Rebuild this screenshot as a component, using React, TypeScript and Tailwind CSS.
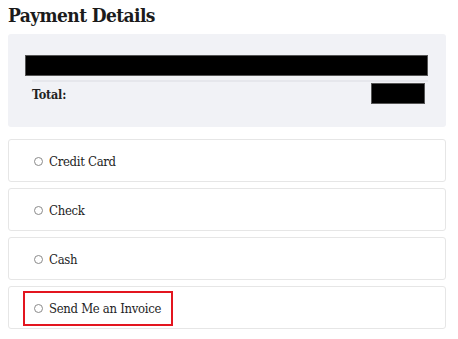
import React from 'react';

const options = ['Credit Card', 'Check', 'Cash', 'Send Me an Invoice'];

export default function App() {
  return (
    <div className="w-[458px] h-[339px] bg-white pl-2 pt-[2px] font-['DejaVu_Serif',serif] [font-stretch:semi-condensed] text-[#222]">
      <h2 className="text-[19px] font-bold leading-[26px] tracking-[-0.6px] text-[#1b1b1b]">Payment Details</h2>

      <div className="w-[438px]">
        {/* Summary box */}
        <div className="mt-[6px] h-[93px] rounded-[3px] bg-[#f1f2f6] pl-[17px] pr-[18px] pt-[21px]">
          <div className="h-[21px] bg-black border border-[#555]" />
          <div className="ml-[7px] border-t-2 border-[#e6e7ec] mt-[4px] flex items-start justify-between pr-[3px]">
            <span className="mt-[4px] text-[12.5px] font-bold leading-[18px] tracking-[-0.2px]">Total:</span>
            <div className="mt-px h-[21px] w-[54px] bg-black border border-[#555]" />
          </div>
        </div>

        {/* Payment options */}
        <div className="mt-[12px] flex flex-col gap-[6px]">
          {options.map((label, i) => {
            const last = i === options.length - 1;
            return (
              <div
                key={label}
                className="h-[43px] rounded-[3px] border border-[#e6e6e6] bg-white flex items-center pl-[14px] pt-[2px]"
              >
                <div
                  className={
                    last
                      ? 'flex items-center h-[35px] border-2 border-[#e3151f] pl-[9px] pr-[10px]'
                      : 'flex items-center pl-[11px]'
                  }
                >
                  <span className="w-[9px] h-[9px] rounded-full border border-[#8a8a8a] mr-[6px] shrink-0" />
                  <span className="whitespace-nowrap text-[13px] leading-[18px] tracking-[-0.3px] text-[#1e1e1e]">{label}</span>
                </div>
              </div>
            );
          })}
        </div>
      </div>
    </div>
  );
}
